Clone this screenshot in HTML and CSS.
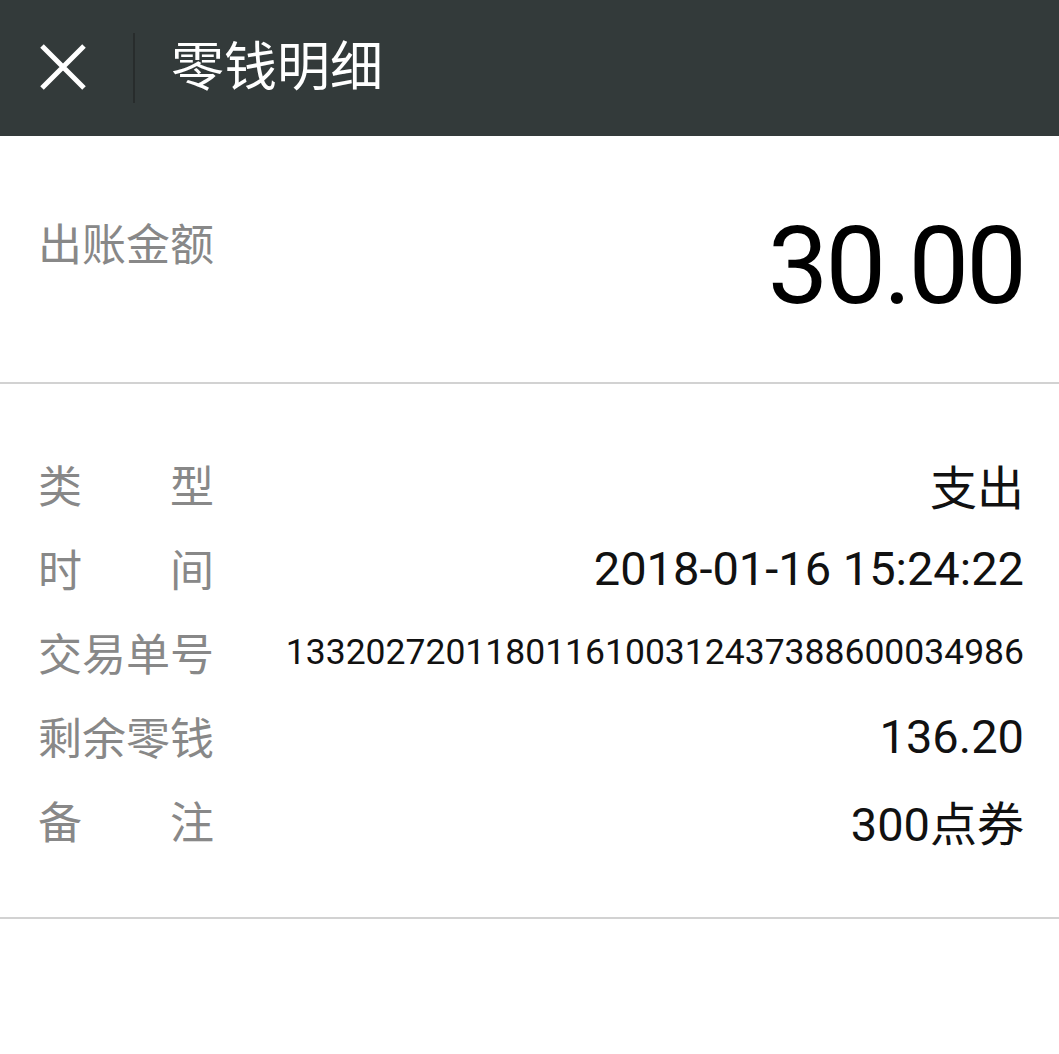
FILE: index.html
```html
<!DOCTYPE html>
<html lang="zh-CN">

<head>
    <meta charset="UTF-8">
    <meta name="viewport" content="width=device-width, initial-scale=1.0">
    <title>零钱明细</title>
    <link rel="stylesheet" href="styles.css">
</head>

<body>
    <header class="topbar">
        <div class="close-btn">
            <svg width="46" height="46" viewBox="0 0 46 46">
                <path d="M2 2 L44 44 M44 2 L2 44" stroke="#fff" stroke-width="5" fill="none" />
            </svg>
        </div>
        <div class="topbar-divider"></div>
        <h1 class="topbar-title">零钱明细</h1>
    </header>

    <section class="amount">
        <p class="amount-label">出账金额</p>
        <p class="amount-value">30.00</p>
    </section>

    <section class="details">
        <!-- detail rows -->
        <div class="row">
            <span class="row-label spread"><span>类</span><span>型</span></span>
            <span class="row-value">支出</span>
        </div>
        <div class="row">
            <span class="row-label spread"><span>时</span><span>间</span></span>
            <span class="row-value">2018-01-16 15:24:22</span>
        </div>
        <div class="row">
            <span class="row-label">交易单号</span>
            <span class="row-value small">1332027201180116100312437388600034986</span>
        </div>
        <div class="row">
            <span class="row-label">剩余零钱</span>
            <span class="row-value">136.20</span>
        </div>
        <div class="row">
            <span class="row-label spread"><span>备</span><span>注</span></span>
            <span class="row-value">300点券</span>
        </div>
    </section>
</body>

</html>
```

FILE: styles.css
```css
/* Reset some default styles */
body, h1, p {
    margin: 0;
    padding: 0;
}

body {
    font-family: Roboto, "Noto Sans CJK SC", sans-serif;
    background-color: #fff;
    color: #111;
}

/* Top bar */
.topbar {
    height: 136px;
    background-color: #333a3a;
    display: flex;
    align-items: center;
    padding-left: 40px;
}

.close-btn {
    width: 46px;
    height: 46px;
    margin-top: -2px;
}

.close-btn svg {
    display: block;
}

.topbar-divider {
    width: 2px;
    height: 70px;
    background-color: #282c2c;
    margin-left: 47px;
}

.topbar-title {
    font-size: 53px;
    font-weight: normal;
    color: #fff;
    margin-left: 36px;
    line-height: 1;
}

/* Amount block */
.amount {
    height: 246px;
    border-bottom: 2px solid #d2d2d2;
    display: flex;
    justify-content: space-between;
    align-items: flex-start;
    padding: 0 35px 0 38px;
}

.amount-label {
    font-size: 44px;
    color: #888;
    line-height: 1;
    margin-top: 88px;
}

.amount-value {
    font-size: 108px;
    line-height: 1;
    color: #000;
    letter-spacing: -3px;
    margin-top: 76px;
}

/* Details */
.details {
    padding: 58px 35px 55px 38px;
    border-bottom: 2px solid #d2d2d2;
}

.row {
    display: flex;
    justify-content: space-between;
    align-items: center;
    height: 84px;
}

.row-label {
    font-size: 44px;
    color: #888;
    width: 176px;
    white-space: nowrap;
}

.spread {
    display: flex;
    justify-content: space-between;
}

.row-value {
    font-size: 47px;
    color: #111;
}

.row-value.small {
    font-size: 35.5px;
}
```
